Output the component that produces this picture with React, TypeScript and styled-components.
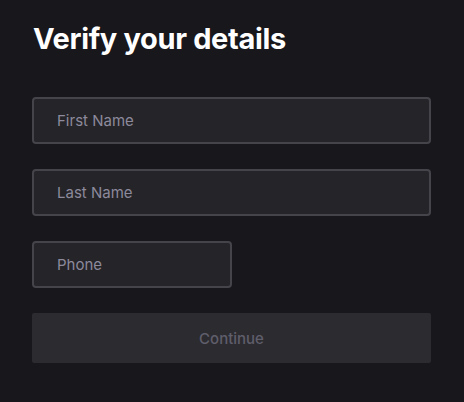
import styled, { createGlobalStyle } from "styled-components";

const GlobalStyle = createGlobalStyle`
  html, body {
    margin: 0;
    padding: 0;
    background: #18171b;
  }

  body {
    font-family: Inter, "Noto Sans", sans-serif;
  }
`;

const Wrapper = styled.div`
  width: 464px;
  height: 402px;
  box-sizing: border-box;
  padding: 21px 33px 0 32px;

  display: flex;
  flex-direction: column;
`;

const Title = styled.h1`
  margin: 0 0 40px 1px;
  font-size: 29px;
  line-height: 36px;
  font-weight: 700;
  color: #ffffff;
  letter-spacing: -0.35px;
`;

const Form = styled.form`
  display: flex;
  flex-direction: column;
  gap: 25px;
`;

const Input = styled.input<{ $width?: number }>`
  box-sizing: border-box;
  width: ${(p) => (p.$width ? `${p.$width}px` : "100%")};
  height: 47px;
  padding: 0 23px;
  border: 2px solid #45444b;
  border-radius: 4px;
  background: #252428;
  color: #efeff1;
  font-family: Inter, "Noto Sans", sans-serif;
  font-size: 15px;
  outline: none;

  &::placeholder {
    color: #8c8a9c;
  }
`;

const Button = styled.button`
  height: 50px;
  border: none;
  border-radius: 2px;
  background: #2c2b30;
  color: #5f5e6b;
  font-family: Inter, "Noto Sans", sans-serif;
  font-size: 15px;
  font-weight: 500;
  cursor: not-allowed;
`;

export default function App() {
  return (
    <>
      <GlobalStyle />
      <Wrapper>
        <Title>Verify your details</Title>
        <Form onSubmit={(e) => e.preventDefault()}>
          <Input placeholder="First Name" />
          <Input placeholder="Last Name" />
          <Input placeholder="Phone" $width={200} />
          <Button type="submit" disabled>
            Continue
          </Button>
        </Form>
      </Wrapper>
    </>
  );
}
